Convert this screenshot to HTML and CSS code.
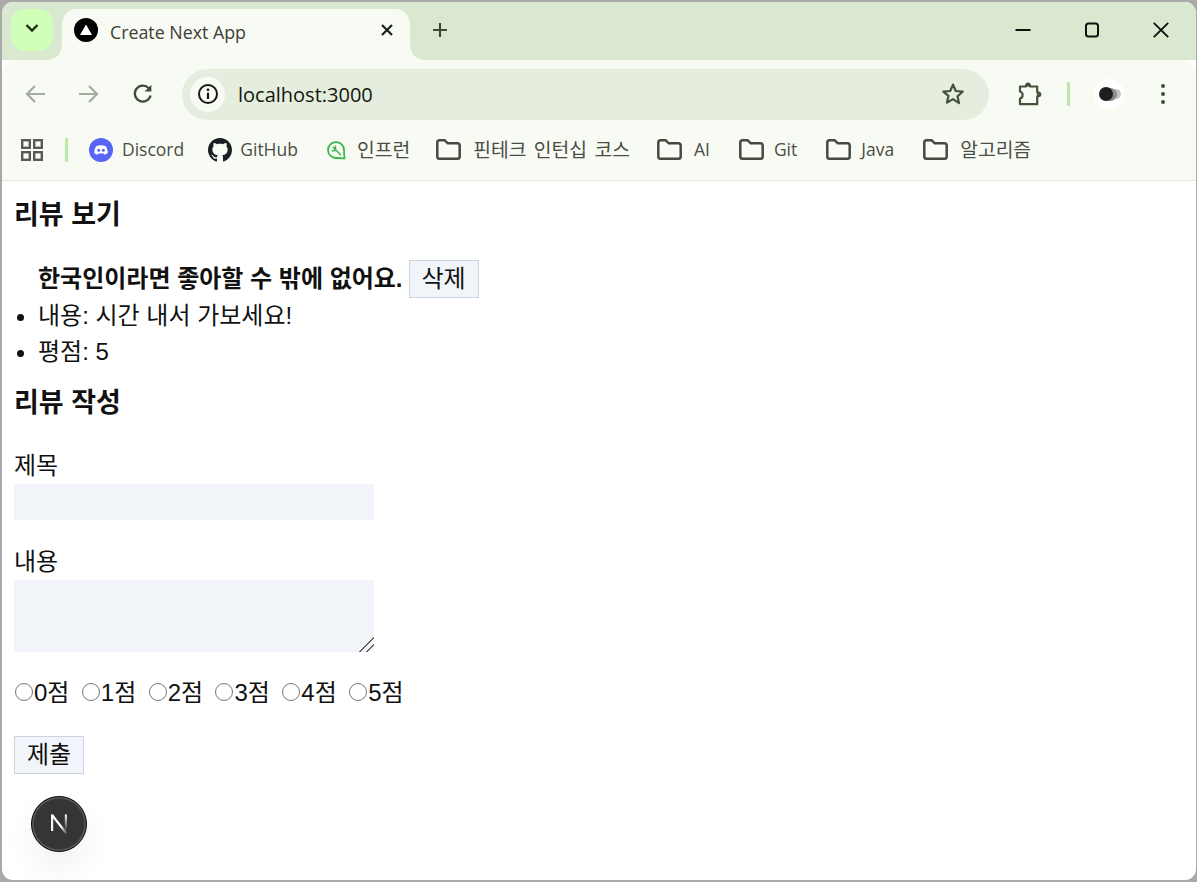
FILE: index.html
```html
<!DOCTYPE html>
<html lang="ko">
<head>
<meta charset="utf-8">
<title>Create Next App</title>
<link rel="stylesheet" href="styles.css">
</head>
<body>
<svg class="defs" width="0" height="0" aria-hidden="true">
  <symbol id="folder" viewBox="0 0 25 21">
    <path d="M1.300 3.600C1.300 2.200 2.200 1.300 3.600 1.300H8.800L11.800 4.300H21.400C22.800 4.300 23.700 5.200 23.700 6.600V17.400C23.700 18.800 22.800 19.700 21.400 19.700H3.600C2.200 19.700 1.300 18.800 1.300 17.400Z" fill="none" stroke="#45493f" stroke-width="2.500" stroke-linejoin="round"/>
  </symbol>
</svg>
<div class="window">
  <header class="tabstrip">
    <div class="tabgroup">
      <svg width="16" height="10" viewBox="0 0 16 10"><path d="M2.500 2L8 7.500 13.500 2" fill="none" stroke="#1f2a1a" stroke-width="2.400"/></svg>
    </div>
    <div class="tab">
      <svg class="tab-fav" width="24" height="24" viewBox="0 0 24 24"><circle cx="12" cy="12" r="12" fill="#000"/><path d="M12 6.500L18 17H6Z" fill="#fff"/></svg>
      <span class="tab-title">Create Next App</span>
      <svg class="tab-close" width="14" height="14" viewBox="0 0 14 14"><path d="M2 2L12 12M12 2L2 12" stroke="#1c2118" stroke-width="2.200"/></svg>
    </div>
    <svg class="newtab" width="18" height="18" viewBox="0 0 18 18"><path d="M9 2V16M2 9H16" stroke="#3d4a36" stroke-width="2.200"/></svg>
    <div class="winctl">
      <svg width="16" height="16" viewBox="0 0 16 16"><path d="M0.500 8H15.500" stroke="#111" stroke-width="2"/></svg>
      <svg width="16" height="16" viewBox="0 0 16 16"><rect x="2" y="1.500" width="12" height="13" rx="2.500" fill="none" stroke="#111" stroke-width="2"/></svg>
      <svg width="16" height="16" viewBox="0 0 16 16"><path d="M0.800 0.800L15.200 15.200M15.200 0.800L0.800 15.200" stroke="#111" stroke-width="1.900"/></svg>
    </div>
  </header>

  <div class="chrome">
    <div class="toolbar">
      <svg class="tb-back" width="22" height="20" viewBox="0 0 22 20"><path d="M21 10H3M11 2L3 10l8 8" fill="none" stroke="#a5aba0" stroke-width="2.200"/></svg>
      <svg class="tb-fwd" width="22" height="20" viewBox="0 0 22 20"><path d="M1 10H19M11 2l8 8-8 8" fill="none" stroke="#a5aba0" stroke-width="2.200"/></svg>
      <svg class="tb-reload" width="22" height="22" viewBox="0 0 22 22"><path d="M18.600 12.500A8 8 0 1 1 16.800 5.200" fill="none" stroke="#3f4c39" stroke-width="2.300"/><path d="M19.400 1.800V8.600H12.600Z" fill="#3f4c39"/></svg>
      <div class="omnibox">
        <div class="info">
          <svg width="22" height="22" viewBox="0 0 22 22"><circle cx="11" cy="11" r="9" fill="none" stroke="#15170f" stroke-width="2"/><path d="M11 9.800V16" stroke="#15170f" stroke-width="2.200"/><circle cx="11" cy="6.800" r="1.400" fill="#15170f"/></svg>
        </div>
        <span class="url">localhost:3000</span>
        <svg class="star" width="24" height="24" viewBox="0 0 24 24"><path d="M12 2.600l2.800 6.400 6.900.7-5.200 4.600 1.500 6.800L12 17.100 6 20.600l1.500-6.800L2.300 9.700l6.900-.7Z" fill="none" stroke="#45503f" stroke-width="2.200" stroke-linejoin="round"/></svg>
      </div>
      <svg class="ext" width="26" height="26" viewBox="0 0 26 26"><path d="M3 5.500H9C8.600 1.800 13.400 1.800 13 5.500H20.200V11.400C24 11 24 15.800 20.200 15.400V23.200H3V17.500C6.500 16.500 6.500 11.500 3 10.500Z" fill="none" stroke="#44523c" stroke-width="2.200" stroke-linejoin="round"/><circle cx="11" cy="3.600" r="2.200" fill="#44523c"/><circle cx="22.200" cy="13.400" r="2.200" fill="#44523c"/></svg>
      <i class="sep tb-sep"></i>
      <div class="profile"><i class="p-ghost2"></i><i class="p-ghost"></i><i class="p-dot"></i></div>
      <svg class="menu" width="6" height="20" viewBox="0 0 6 20"><circle cx="3" cy="2" r="2" fill="#3f4c39"/><circle cx="3" cy="10" r="2" fill="#3f4c39"/><circle cx="3" cy="18" r="2" fill="#3f4c39"/></svg>
    </div>

    <nav class="bookmarks">
      <svg class="apps" width="22" height="22" viewBox="0 0 22 22"><g fill="none" stroke="#585b53" stroke-width="2.400"><rect x="1.200" y="1.200" width="7.600" height="7.600"/><rect x="13.200" y="1.200" width="7.600" height="7.600"/><rect x="1.200" y="13.200" width="7.600" height="7.600"/><rect x="13.200" y="13.200" width="7.600" height="7.600"/></g></svg>
      <i class="sep bm-sep"></i>
      <a class="bm bm-discord">
        <svg width="24" height="24" viewBox="0 0 24 24"><circle cx="12" cy="12" r="12" fill="#5865f2"/><path d="M7.200 8.200C9.800 7 14.200 7 16.800 8.200C18 10 18.700 12.200 18.800 15C17.800 15.900 16.700 16.400 15.500 16.700L14.700 15.400H9.300L8.500 16.700C7.300 16.400 6.200 15.900 5.200 15C5.300 12.200 6 10 7.200 8.200Z" fill="#fff"/><circle cx="9.700" cy="12.300" r="1.500" fill="#5865f2"/><circle cx="14.300" cy="12.300" r="1.500" fill="#5865f2"/></svg>
        <span>Discord</span>
      </a>
      <a class="bm bm-github">
        <svg width="24" height="24" viewBox="0 0 16 16"><path fill="#1b1f23" d="M8 0C3.580 0 0 3.580 0 8c0 3.540 2.290 6.530 5.470 7.590.4.070.55-.170.55-.380 0-.190-.010-.820-.010-1.490-2.010.370-2.530-.490-2.690-.940-.090-.230-.480-.940-.820-1.130-.280-.150-.680-.520-.010-.530.630-.010 1.080.580 1.230.820.720 1.210 1.870.870 2.330.660.070-.520.280-.870.510-1.070-1.780-.200-3.640-.890-3.640-3.950 0-.870.310-1.590.820-2.150-.080-.200-.360-1.020.080-2.120 0 0 .670-.210 2.200.820.640-.180 1.320-.270 2-.270s1.360.090 2 .270c1.530-1.040 2.200-.820 2.200-.820.440 1.100.160 1.920.080 2.120.510.560.820 1.270.820 2.150 0 3.070-1.870 3.750-3.650 3.950.290.250.540.730.540 1.480 0 1.070-.010 1.930-.010 2.200 0 .210.150.460.550.380A8.013 8.013 0 0 0 16 8c0-4.420-3.580-8-8-8z"/></svg>
        <span>GitHub</span>
      </a>
      <a class="bm bm-inf">
        <svg width="20" height="20" viewBox="0 0 20 20"><path d="M10 2.200C14.500 2.200 18 5.500 18 10C18 13 18.300 15.800 18.500 18.400C16 18.200 13 18 10 18C5.500 18 2 14.500 2 10C2 5.500 5.500 2.200 10 2.200Z" fill="none" stroke="#3cb64a" stroke-width="1.800"/><path d="M7 7L15 15.200M9.500 9.500V5.500M9.800 10.300L5.800 11" fill="none" stroke="#3cb64a" stroke-width="1.500"/></svg>
        <span class="ko">인프런</span>
      </a>
      <a class="bm bm-folder"><svg width="25" height="21"><use href="#folder"/></svg><span class="ko">핀테크 인턴십 코스</span></a>
      <a class="bm bm-folder bm-ai"><svg width="25" height="21"><use href="#folder"/></svg><span>AI</span></a>
      <a class="bm bm-git"><svg width="25" height="21"><use href="#folder"/></svg><span>Git</span></a>
      <a class="bm bm-java"><svg width="25" height="21"><use href="#folder"/></svg><span>Java</span></a>
      <a class="bm bm-folder"><svg width="25" height="21"><use href="#folder"/></svg><span class="ko">알고리즘</span></a>
    </nav>
  </div>

  <main class="page">
    <h2 class="h-view">리뷰 보기</h2>
    <ul class="review">
      <li class="review-title"><strong>한국인이라면 좋아할 수 밖에 없어요.</strong> <button class="btn" type="button">삭제</button></li>
      <li>내용: 시간 내서 가보세요!</li>
      <li>평점: 5</li>
    </ul>
    <h2 class="h-write">리뷰 작성</h2>
    <form class="form">
      <div class="field">
        <label for="t">제목</label>
        <input id="t" class="control" type="text">
      </div>
      <div class="field">
        <label for="c">내용</label>
        <textarea id="c" class="control area"></textarea>
      </div>
      <div class="ratings">
        <label class="rate"><input type="radio" name="r">0점</label>
        <label class="rate"><input type="radio" name="r">1점</label>
        <label class="rate"><input type="radio" name="r">2점</label>
        <label class="rate"><input type="radio" name="r">3점</label>
        <label class="rate"><input type="radio" name="r">4점</label>
        <label class="rate"><input type="radio" name="r">5점</label>
      </div>
      <button class="btn" type="button">제출</button>
    </form>
    <div class="nextbadge">
      <svg width="20" height="22" viewBox="0 0 20 22"><defs><linearGradient id="ng" gradientUnits="userSpaceOnUse" x1="0" y1="1" x2="0" y2="16"><stop offset="0" stop-color="#fff"/><stop offset="1" stop-color="#fff" stop-opacity=".1"/></linearGradient><linearGradient id="nd" gradientUnits="userSpaceOnUse" x1="3" y1="2" x2="18" y2="21"><stop offset=".6" stop-color="#fff"/><stop offset="1" stop-color="#fff" stop-opacity=".1"/></linearGradient></defs><rect x="2" y="1.500" width="2.200" height="16.500" fill="#f4f4f4"/><path d="M3 2L17.500 20.500" fill="none" stroke="url(#nd)" stroke-width="2.200"/><rect x="15.800" y="1.500" width="2.200" height="15" fill="url(#ng)"/></svg>
    </div>
  </main>
</div>
</body>
</html>
```
FILE: styles.css
```css
* { box-sizing: border-box; }
html, body { margin: 0; height: 100%; }
body { background: #a9a9a9; padding: 2px 1px 2px 2px; overflow: hidden; }
.defs { position: absolute; }

.window {
  position: relative;
  height: 878px;
  border-radius: 11px;
  overflow: hidden;
  display: flex;
  flex-direction: column;
  background: #fff;
}

/* tab strip */
.tabstrip {
  height: 58px;
  flex: none;
  background: #dae8cf;
  display: flex;
  align-items: flex-start;
  padding: 7px 0 0 9px;
}
.tabgroup {
  width: 42px;
  height: 42px;
  border-radius: 14px;
  background: #d0ffb9;
  display: flex;
  align-items: center;
  justify-content: center;
  padding-bottom: 4px;
}
.tab {
  width: 348px;
  height: 51px;
  margin-left: 9px;
  background: #f8fbf3;
  border-radius: 15px 15px 0 0;
  position: relative;
  display: flex;
  align-items: center;
  padding: 0 16px 5px 12px;
}
.tab::before, .tab::after {
  content: "";
  position: absolute;
  bottom: 0;
  width: 14px;
  height: 14px;
}
.tab::before { left: -14px; background: radial-gradient(circle at 0 0, transparent 13.500px, #f8fbf3 14px); }
.tab::after { right: -14px; background: radial-gradient(circle at 100% 0, transparent 13.500px, #f8fbf3 14px); }
.tab-fav { margin-top: -4px; flex: none; }
.tab-title {
  font: 17.800px "Open Sans", "Noto Sans", sans-serif;
  color: #3b4036;
  margin-left: 12px;
  flex: 1;
}
.tab-close { margin-top: -4px; }
.newtab { margin: 12px 0 0 21px; }
.winctl {
  margin-left: auto;
  height: 28px;
  margin-top: 7px;
  padding-right: 27px;
  display: flex;
  align-items: center;
  gap: 53px;
}

/* toolbar */
.chrome {
  flex: none;
  height: 121px;
  background: #f8fbf3;
  border-radius: 14px 14px 0 0;
  border-bottom: 1px solid #e3e8d8;
  position: relative;
  z-index: 1;
  display: flex;
  flex-direction: column;
}
.toolbar {
  height: 69px;
  flex: none;
  display: flex;
  align-items: center;
  padding-left: 22px;
  padding-bottom: 1px;
}
.tb-fwd { margin-left: 32px; }
.tb-reload { margin-left: 32px; }
.omnibox {
  width: 807px;
  height: 51px;
  margin-left: 28px;
  border-radius: 26px;
  background: #e4edde;
  display: flex;
  align-items: center;
  padding: 0 24px 0 8px;
}
.info {
  width: 35px;
  height: 35px;
  border-radius: 50%;
  background: #f8fbf3;
  display: flex;
  align-items: center;
  justify-content: center;
  flex: none;
}
.url {
  font: 20px "Open Sans", "Noto Sans", sans-serif;
  color: #14170f;
  margin-left: 13px;
  flex: 1;
}
.ext { margin-left: 28px; }
.sep { display: block; width: 3px; background: #bce8a9; border-radius: 1px; flex: none; }
.tb-sep { height: 24px; margin-left: 24px; }
.profile {
  width: 30px;
  height: 30px;
  border-radius: 50%;
  background: #fff;
  margin-left: 24px;
  position: relative;
  flex: none;
}
.p-dot, .p-ghost, .p-ghost2 { position: absolute; border-radius: 50%; }
.p-dot { left: 5px; top: 8px; width: 14px; height: 14px; background: #1e1e1e; }
.p-ghost { left: 10px; top: 8.500px; width: 13px; height: 13px; background: #8d8d8d; }
.p-ghost2 { left: 17px; top: 10px; width: 10px; height: 10px; background: #c4c4c4; }
.menu { margin-left: 36px; }

/* bookmarks */
.bookmarks {
  height: 51px;
  flex: none;
  display: flex;
  align-items: center;
  padding: 0 0 10px 19px;
  font: 17.500px "Open Sans", "Noto Sans CJK KR", sans-serif;
  color: #4a4e45;
}
.bm-sep { height: 24px; margin: 0 21px 0 22px; }
.bm { display: flex; align-items: center; gap: 10px; margin-right: 28px; white-space: nowrap; }
.bm span { line-height: 24px; position: relative; top: -1px; }
.bm .ko { font: 19.300px "Noto Sans CJK KR", sans-serif; word-spacing: 2px; }
.bm-discord { gap: 9px; margin-right: 24px; }
.bm-github { gap: 8px; }
.bm-inf { gap: 11px; margin-right: 26px; }
.bm-folder { gap: 12px; margin-right: 27px; }
.bm-ai { margin-right: 29px; }
.bm-git { margin-right: 29px; }
.bm-java { margin-right: 29px; }

/* page */
.page {
  flex: 1;
  position: relative;
  padding: 14px 12px 0;
  font: 24px/36px "Liberation Sans", "Noto Sans CJK KR", sans-serif;
  color: #111;
}
h2 { margin: 0; font-size: 27px; line-height: 40px; font-weight: 700; }
.h-view { margin-bottom: 25px; }
.review { margin: 0; padding: 0 0 0 24px; list-style: disc; }
.review li { position: relative; top: 1px; }
.review-title { list-style: none; height: 37px; display: flex; align-items: center; gap: 6px; }
.review .review-title { top: 0; }
.h-write { margin-top: 14px; margin-bottom: 25px; }
.field { display: flex; flex-direction: column; margin-bottom: 24px; }
.control {
  display: block;
  width: 360px;
  height: 36px;
  border: 0;
  padding: 0;
  margin: 0;
  background: #f1f4f9;
  font: inherit;
}
.area { height: 72px; resize: vertical; }
.area::-webkit-resizer {
  background: linear-gradient(135deg, transparent 50%, #666 50%, #666 56%, transparent 56%, transparent 72%, #666 72%, #666 78%, transparent 78%);
}
.ratings { display: flex; gap: 11.400px; height: 34px; margin-bottom: 26px; align-items: center; }
.rate { display: flex; align-items: center; }
.rate input {
  appearance: none;
  width: 18px;
  height: 18px;
  margin: 0 1px 2px;
  border: 1.500px solid #767676;
  border-radius: 50%;
  background: #fff;
}
.btn {
  width: 70px;
  height: 38px;
  padding: 0;
  background: #f1f5f9;
  border: 1.500px solid #cbd5e1;
  font: 24px/1 "Liberation Sans", "Noto Sans CJK KR", sans-serif;
  color: #111;
  flex: none;
}

.nextbadge {
  position: absolute;
  left: 29px;
  bottom: 28px;
  width: 56px;
  height: 56px;
  border-radius: 50%;
  background: #353535;
  border: 1.500px solid #0b0b0b;
  box-shadow: inset 0 0 0 1.500px #5c5c5c, 0 16px 32px rgba(0,0,0,.06);
  display: flex;
  align-items: center;
  justify-content: center;
}
```
